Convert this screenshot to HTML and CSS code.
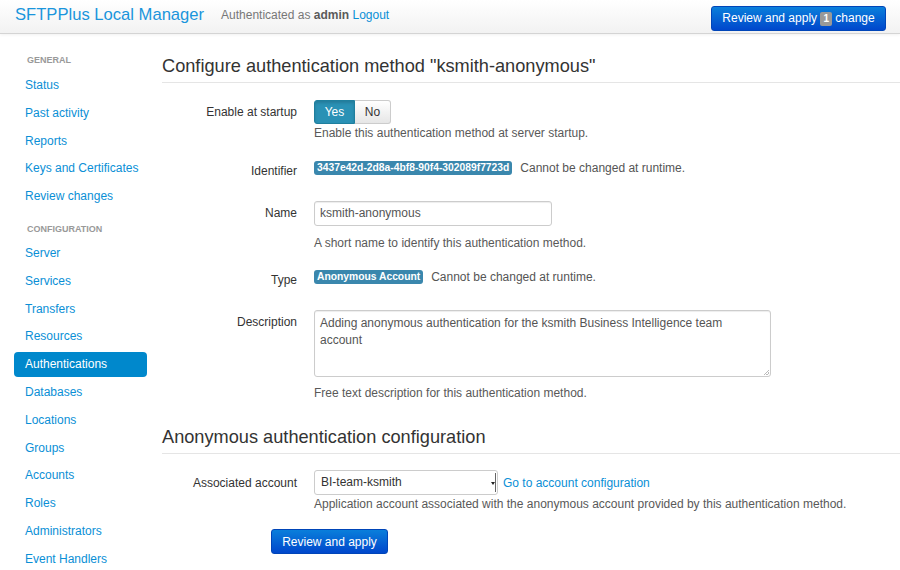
FILE: index.html
```html
<!DOCTYPE html>
<html>
<head>
<meta charset="utf-8">
<link rel="stylesheet" href="styles.css">
</head>
<body>
<header class="navbar">
  <a class="brand" href="#">SFTPPlus Local Manager</a>
  <span class="auth">Authenticated as <b>admin</b> <a href="#">Logout</a></span>
  <button class="btn-primary top-btn">Review and apply <span class="count">1</span> change</button>
</header>
<div class="layout">
  <nav class="sidebar">
    <div class="nav-header first">General</div>
    <a class="nav-item" href="#">Status</a>
    <a class="nav-item" href="#">Past activity</a>
    <a class="nav-item" href="#">Reports</a>
    <a class="nav-item" href="#">Keys and Certificates</a>
    <a class="nav-item" href="#">Review changes</a>
    <div class="nav-header">Configuration</div>
    <a class="nav-item" href="#">Server</a>
    <a class="nav-item" href="#">Services</a>
    <a class="nav-item" href="#">Transfers</a>
    <a class="nav-item" href="#">Resources</a>
    <a class="nav-item active" href="#">Authentications</a>
    <a class="nav-item" href="#">Databases</a>
    <a class="nav-item" href="#">Locations</a>
    <a class="nav-item" href="#">Groups</a>
    <a class="nav-item" href="#">Accounts</a>
    <a class="nav-item" href="#">Roles</a>
    <a class="nav-item" href="#">Administrators</a>
    <a class="nav-item" href="#">Event Handlers</a>
  </nav>
  <main class="content">
    <h2 class="legend">Configure authentication method "ksmith-anonymous"</h2>
    <div class="row r-enable">
      <label class="lbl">Enable at startup</label>
      <div class="ctl">
        <div class="toggle"><span class="tog yes">Yes</span><span class="tog no">No</span></div>
        <div class="help">Enable this authentication method at server startup.</div>
      </div>
    </div>
    <div class="row r-id">
      <label class="lbl">Identifier</label>
      <div class="ctl inline"><span class="badge">3437e42d-2d8a-4bf8-90f4-302089f7723d</span><span class="note">Cannot be changed at runtime.</span></div>
    </div>
    <div class="row r-name">
      <label class="lbl">Name</label>
      <div class="ctl">
        <div class="input name-input">ksmith-anonymous</div>
        <div class="help help-gap">A short name to identify this authentication method.</div>
      </div>
    </div>
    <div class="row r-type">
      <label class="lbl">Type</label>
      <div class="ctl inline"><span class="badge">Anonymous Account</span><span class="note">Cannot be changed at runtime.</span></div>
    </div>
    <div class="row r-desc">
      <label class="lbl">Description</label>
      <div class="ctl">
        <div class="input textarea">Adding anonymous authentication for the ksmith Business Intelligence team account<span class="grip"></span></div>
        <div class="help help-gap2">Free text description for this authentication method.</div>
      </div>
    </div>
    <h2 class="legend legend2">Anonymous authentication configuration</h2>
    <div class="row r-acc">
      <label class="lbl">Associated account</label>
      <div class="ctl">
        <div class="inline">
          <div class="select">BI-team-ksmith<span class="arrow"></span></div>
          <a class="golink" href="#">Go to account configuration</a>
        </div>
        <div class="help">Application account associated with the anonymous account provided by this authentication method.</div>
      </div>
    </div>
    <div class="actions"><button class="btn-primary apply">Review and apply</button></div>
  </main>
</div>
</body>
</html>
```
FILE: styles.css
```css
* { box-sizing: border-box; }
html, body { margin: 0; padding: 0; }
body {
  width: 900px;
  height: 570px;
  overflow: hidden;
  background: #fff;
  font-family: "Liberation Sans", Arial, sans-serif;
  font-size: 12px;
  color: #333;
}
a { color: #0a8fd6; text-decoration: none; }

.navbar {
  height: 34px;
  display: flex;
  align-items: flex-start;
  padding: 0 14px 0 15px;
  background: linear-gradient(#ffffff, #f2f2f2);
  border-bottom: 1px solid #d4d4d4;
  box-shadow: 0 1px 3px rgba(0,0,0,0.06);
}
.brand { font-size: 16.6px; color: #1a95dc; margin-top: 5px; }
.auth { margin-left: 17px; color: #777; font-size: 12px; margin-top: 8px; }
.auth b { color: #5a5a5a; }
.btn-primary {
  font-family: inherit;
  color: #fff;
  border: 1px solid #0045b8;
  border-radius: 3px;
  background: linear-gradient(#0a7fdb, #0047cc);
  font-size: 12px;
  padding: 0 10px;
  height: 25px;
}
.top-btn { margin-left: auto; width: 175px; margin-top: 6px; }
.count {
  display: inline-block;
  background: #999;
  color: #fff;
  font-weight: bold;
  font-size: 10px;
  padding: 1px 3px;
  border-radius: 2px;
  line-height: 12px;
}

.layout { display: flex; }
.sidebar {
  width: 162px;
  flex-shrink: 0;
  padding: 15px 15px 0 14px;
  display: flex;
  flex-direction: column;
}
.nav-header {
  text-transform: uppercase;
  font-size: 9px;
  font-weight: bold;
  color: #999;
  padding-left: 13px;
  height: 24px;
  line-height: 24px;
  margin-top: 5px;
}
.nav-header.first { margin-top: 0; height: 24px; line-height: 22px; }
.nav-item {
  display: block;
  height: 25px;
  line-height: 25px;
  margin-bottom: 2.8px;
  padding-left: 11px;
  font-size: 12px;
  color: #0a8fd6;
  border-radius: 4px;
}
.nav-item.active { background: #0088cc; color: #fff; }

.content { flex: 1; padding-top: 20px; }
.legend {
  font-size: 18.2px;
  font-weight: normal;
  margin: 0 0 17px 0;
  padding-bottom: 4px;
  line-height: 24px;
  border-bottom: 1px solid #e5e5e5;
  color: #333;
}
.legend2 { margin-top: 25px; margin-bottom: 16px; }
.row { display: flex; align-items: flex-start; }
.lbl {
  width: 135px;
  text-align: right;
  flex-shrink: 0;
  margin-right: 17px;
  color: #333;
  line-height: 14px;
}
.ctl { display: flex; flex-direction: column; }
.inline { display: flex; flex-direction: row; align-items: center; }
.help { color: #595959; margin-top: 2px; line-height: 14px; }
.help-gap { margin-top: 10px; }
.help-gap2 { margin-top: 9px; }

.r-enable { margin-bottom: 21px; }
.r-enable .lbl { padding-top: 5px; }
.toggle { display: flex; height: 24px; }
.tog {
  display: inline-block;
  line-height: 22px;
  font-size: 12px;
  border: 1px solid #ccc;
}
.tog.yes {
  width: 41px;
  text-align: center;
  background: #2a91b5;
  border-color: #1f7f9e;
  color: #fff;
  border-radius: 3px 0 0 3px;
  box-shadow: inset 0 2px 3px rgba(0,0,0,0.15);
}
.tog.no {
  width: 36px;
  text-align: center;
  background: linear-gradient(#ffffff, #e6e6e6);
  border-left: none;
  border-radius: 0 3px 3px 0;
  color: #333;
}

.r-id { margin-bottom: 23px; }
.r-id .lbl, .r-type .lbl { padding-top: 3px; }
.badge {
  display: inline-block;
  background: #3a87ad;
  color: #fff;
  font-weight: bold;
  font-size: 10.3px;
  line-height: 14px;
  padding: 0 3px;
  border-radius: 3px;
}
.note { margin-left: 8px; color: #555; line-height: 14px; }

.input {
  border: 1px solid #ccc;
  border-radius: 3px;
  box-shadow: inset 0 1px 1px rgba(0,0,0,0.075);
  padding: 0 5px;
  color: #555;
}
.r-name { margin-bottom: 20px; }
.r-name .lbl { padding-top: 5px; }
.name-input { width: 238px; height: 25px; line-height: 23px; }
.r-type { margin-bottom: 23px; }
.r-desc .lbl { padding-top: 5px; }
.textarea {
  position: relative;
  width: 457px;
  height: 67px;
  padding: 4px 5px;
  line-height: 17px;
}
.grip {
  position: absolute;
  right: 1px;
  bottom: 1px;
  width: 6px;
  height: 6px;
  background: linear-gradient(135deg, transparent 50%, #bbb 50%, #bbb 60%, transparent 60%, transparent 75%, #bbb 75%, #bbb 85%, transparent 85%);
}

.r-acc .lbl { padding-top: 6px; }
.select {
  position: relative;
  width: 184px;
  height: 25px;
  line-height: 23px;
  padding: 0 6px;
  border: 1px solid #ccc;
  border-radius: 3px;
  color: #333;
  background: #fff;
}
.arrow {
  position: absolute;
  right: 1px;
  top: 2px;
  bottom: 2px;
  width: 3px;
  border-right: 1px solid #666;
}
.arrow::after {
  content: "";
  position: absolute;
  right: 0;
  top: 9px;
  border-left: 2px solid transparent;
  border-right: 2px solid transparent;
  border-top: 3px solid #222;
}
.golink { margin-left: 5px; color: #0a8fd6; }
.actions { padding-left: 109px; margin-top: 18px; }
.apply { width: 117px; }
```
